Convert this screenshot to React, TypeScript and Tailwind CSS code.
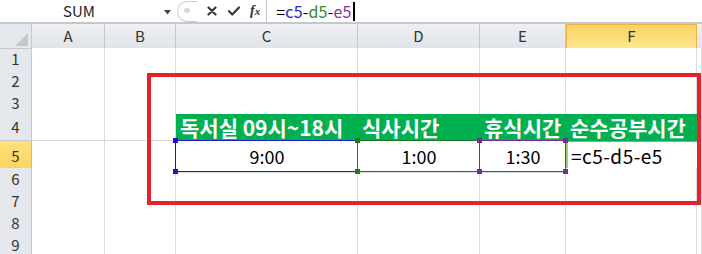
import type { ReactNode } from "react";

const GRID = "grid grid-cols-[32px_73px_71px_182px_122px_86px_131px_1fr]";
const FONT = "font-['Noto_Sans_CJK_KR','Noto_Sans',sans-serif]";

const plain = "border-r border-b border-[#dadcdd] bg-white";

function Handle({ pos, color }: { pos: string; color: string }) {
  return <span className={`absolute h-[5px] w-[5px] ${pos} ${color}`} />;
}

function RangeBox({ border, fill, children }: { border: string; fill: string; children: ReactNode }) {
  return (
    <div className="relative flex items-center justify-center border-b border-[#dadcdd] bg-white text-[18px] text-black">
      <span className={`pointer-events-none absolute -left-px -top-px bottom-0 right-0 border ${border}`} />
      <Handle pos="-left-[3px] -top-[3px]" color={fill} />
      <Handle pos="-right-[2px] -top-[3px]" color={fill} />
      <Handle pos="-left-[3px] -bottom-[2px]" color={fill} />
      <Handle pos="-right-[2px] -bottom-[2px]" color={fill} />
      <span className="relative">{children}</span>
    </div>
  );
}

function RowHead({ n, active }: { n: number; active?: boolean }) {
  return (
    <div
      className={
        active
          ? "flex items-center justify-center border-r border-b border-[#f0b44c] bg-gradient-to-b from-[#ffe07a] to-[#fdd35c] text-[15px] text-[#333]"
          : "flex items-center justify-center border-r border-b border-[#c3c8cf] bg-[#e4e7ec] text-[15px] text-[#333]"
      }
    >
      {n}
    </div>
  );
}

function PlainRow({ n }: { n: number }) {
  return (
    <div className={`${GRID} h-[22px]`}>
      <RowHead n={n} />
      <div className={plain} />
      <div className={plain} />
      <div className={plain} />
      <div className={plain} />
      <div className={plain} />
      <div className={plain} />
      <div className={plain} />
    </div>
  );
}

function GreenHead({ children }: { children: ReactNode }) {
  return (
    <div className="flex items-center whitespace-nowrap bg-[#00b050] pb-[1px] pl-[4px] text-[21px] font-bold leading-none text-white">
      {children}
    </div>
  );
}

export default function App() {
  const letters = ["A", "B", "C", "D", "E"];
  return (
    <div className={`relative h-[254px] w-[702px] overflow-hidden bg-white ${FONT}`}>
      {/* formula bar */}
      <div className="flex h-[22px] items-stretch bg-white">
        <div className="relative flex w-[172px] items-center justify-center pr-[14px] text-[15px] text-[#222]">
          SUM
          <svg className="absolute left-[164px] top-[10px]" width="7" height="5" viewBox="0 0 7 5">
            <path d="M0 0H7L3.5 4.5Z" fill="#444" />
          </svg>
        </div>
        <div className="flex items-center">
          <div className="relative ml-[5px] mt-[1px] h-[21px] w-[20px] rounded-l-full border border-r-0 border-[#c9cdd3]">
            <span className="absolute left-[6px] top-[6px] h-[5px] w-[6px] rounded-full bg-[#d6d9de]" />
          </div>
          <svg className="ml-[10px]" width="10" height="10" viewBox="0 0 10 10">
            <path d="M1.5 1.5L8.5 8.5M8.5 1.5L1.5 8.5" stroke="#3b3b3b" strokeWidth="2.2" strokeLinecap="round" />
          </svg>
          <svg className="ml-[11px]" width="12" height="10" viewBox="0 0 12 10">
            <path d="M1 5.2L4.3 8.5L11 1.5" stroke="#3b3b3b" strokeWidth="2.3" fill="none" strokeLinecap="round" strokeLinejoin="round" />
          </svg>
          <span className="ml-[10px] font-['Liberation_Serif',serif] text-[14px] font-bold italic leading-none text-[#333]">
            f<span className="text-[11px]">x</span>
          </span>
        </div>
        <div className="ml-[6px] w-px bg-[#c8c8c8]" />
        <div className="flex items-center pl-[9px] text-[16px] leading-none tracking-[0.2px] text-black">
          <span>=</span>
          <span className="text-[#2a2ac0]">c5</span>
          <span>-</span>
          <span className="text-[#2e8b2e]">d5</span>
          <span>-</span>
          <span className="text-[#8a2f9a]">e5</span>
          <span className="ml-[1px] h-[19px] w-[2px] bg-black" />
        </div>
      </div>
      <div className="h-[2px] bg-[#c4c7cc]" />

      {/* column header */}
      <div className={`${GRID} h-[24px]`}>
        <div className="relative border-r border-b border-[#c3c8cf] bg-[#e4e7ec]">
          <svg className="absolute left-[15px] top-[9px]" width="13" height="13" viewBox="0 0 13 13">
            <path d="M13 0V13H0Z" fill="#c3c7cd" />
          </svg>
        </div>
        {letters.map((l) => (
          <div
            key={l}
            className="flex items-center justify-center border-r border-b border-[#c3c8cf] bg-gradient-to-b from-[#eef0f3] to-[#e1e4e9] text-[15px] text-[#333]"
          >
            {l}
          </div>
        ))}
        <div className="flex items-center justify-center border border-[#f0b044] bg-gradient-to-b from-[#f8d264] to-[#ffe88e] text-[15px] text-[#333]">
          F
        </div>
        <div className="border-b border-[#c3c8cf] bg-gradient-to-b from-[#eef0f3] to-[#e1e4e9]" />
      </div>

      <PlainRow n={1} />
      <PlainRow n={2} />
      <PlainRow n={3} />

      {/* row 4 */}
      <div className={`${GRID} h-[27px]`}>
        <RowHead n={4} />
        <div className={plain} />
        <div className={plain} />
        <GreenHead>독서실 09시~18시</GreenHead>
        <GreenHead>식사시간</GreenHead>
        <GreenHead>휴식시간</GreenHead>
        <GreenHead>순수공부시간</GreenHead>
        <div className={plain} />
      </div>

      {/* row 5 */}
      <div className={`${GRID} h-[27px]`}>
        <RowHead n={5} active />
        <div className={plain} />
        <div className={plain} />
        <RangeBox border="border-[#1c1cc9]" fill="bg-[#1414e6]">9:00</RangeBox>
        <RangeBox border="border-[#1f7a1f]" fill="bg-[#1a7d1a]">1:00</RangeBox>
        <RangeBox border="border-[#7a2c96]" fill="bg-[#7a2c96]">1:30</RangeBox>
        <div className="flex items-center border-t border-l-2 border-b-2 border-t-[#d27ad2] border-l-[#8fd86a] border-b-black bg-white pl-[3px] text-[19px] tracking-[0.5px] text-black">
          =c5-d5-e5
        </div>
        <div className={plain} />
      </div>

      <PlainRow n={6} />
      <PlainRow n={7} />
      <PlainRow n={8} />
      <PlainRow n={9} />

      {/* annotation */}
      <div className="pointer-events-none absolute left-[147px] top-[73px] h-[132px] w-[554px] border-4 border-[#e3222a]" />
    </div>
  );
}
